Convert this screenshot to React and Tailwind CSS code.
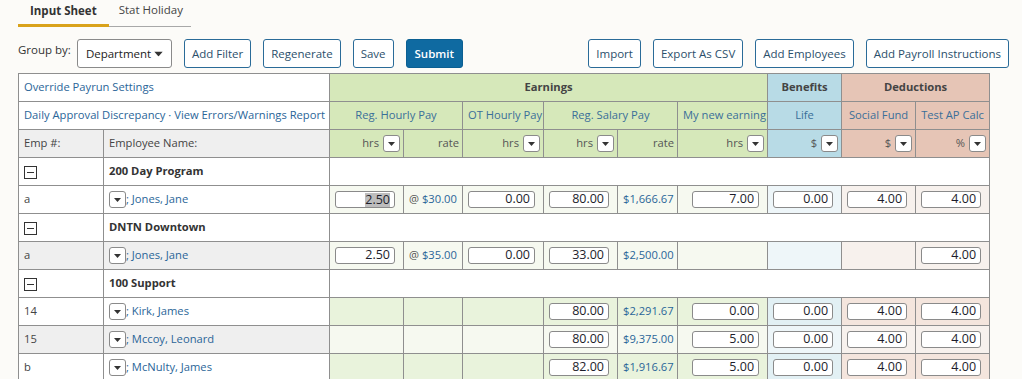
import React from 'react';

const B = 'border border-[#8f8f8f]';

function Caret({ className = '' }) {
  return (
    <svg width="7" height="4" viewBox="0 0 7 4" className={className}>
      <path d="M0 0h7L3.5 4z" fill="#333" />
    </svg>
  );
}

function DropBtn() {
  return (
    <span className="inline-flex h-[17px] w-[17px] shrink-0 items-center justify-center rounded-[3px] border border-[#8a8a8a] bg-white align-middle">
      <Caret />
    </span>
  );
}

function Minus() {
  return (
    <span className="inline-flex h-[13px] w-[13px] items-center justify-center border border-[#333] bg-white">
      <span className="block h-px w-[7px] bg-[#333]" />
    </span>
  );
}

function Num({ v, sel }) {
  return (
    <div className="flex justify-end pr-[3px]">
      <div className="flex h-[17px] w-[67px] items-center justify-end rounded-[3px] border border-[#8a8a8a] bg-white pr-[4px] text-[12.5px] text-[#1d1d2b]">
        {sel ? <span className="bg-[#bdbdbd] leading-[14px]">{v}</span> : v}
      </div>
    </div>
  );
}

const tones = {
  light: { emp: 'bg-white', g: 'bg-[#f6f9f0]', b: 'bg-[#eef6f9]', d: 'bg-[#f7f1ed]' },
  grey: { emp: 'bg-[#efefef]', g: 'bg-[#f6f9f0]', b: 'bg-[#eef6f9]', d: 'bg-[#f7f1ed]' },
  dark: { emp: 'bg-white', g: 'bg-[#e9f3dc]', b: 'bg-[#e2f0f4]', d: 'bg-[#f4e5dd]' },
};

const rows = [
  { type: 'group', name: '200 Day Program' },
  { type: 'emp', tone: 'light', id: 'a', name: 'Jones, Jane', regHrs: '2.50', sel: true, rate: '$30.00', ot: '0.00', sal: '80.00', salRate: '$1,666.67', mine: '7.00', life: '0.00', fund: '4.00', ap: '4.00' },
  { type: 'group', name: 'DNTN Downtown' },
  { type: 'emp', tone: 'grey', id: 'a', name: 'Jones, Jane', regHrs: '2.50', rate: '$35.00', ot: '0.00', sal: '33.00', salRate: '$2,500.00', ap: '4.00' },
  { type: 'group', name: '100 Support' },
  { type: 'emp', tone: 'dark', id: '14', name: 'Kirk, James', sal: '80.00', salRate: '$2,291.67', mine: '0.00', life: '0.00', fund: '4.00', ap: '4.00' },
  { type: 'emp', tone: 'grey', id: '15', name: 'Mccoy, Leonard', sal: '80.00', salRate: '$9,375.00', mine: '5.00', life: '0.00', fund: '4.00', ap: '4.00' },
  { type: 'emp', tone: 'dark', id: 'b', name: 'McNulty, James', sal: '82.00', salRate: '$1,916.67', mine: '5.00', life: '0.00', fund: '4.00', ap: '4.00' },
];

function Btn({ children, primary }) {
  return primary ? (
    <button className="h-[29px] whitespace-nowrap rounded-[3px] border border-[#0b5f92] bg-[#0f6aa1] px-[8px] text-[11.5px] font-semibold text-white">{children}</button>
  ) : (
    <button className="h-[29px] whitespace-nowrap rounded-[3px] border border-[#2a6b98] bg-white px-[7px] text-[11.5px] text-[#2b4f6b]">{children}</button>
  );
}

export default function App() {
  const td = `${B} h-[28px] px-[5px] text-[11.2px]`;
  return (
    <div className="h-[379px] w-[1022px] overflow-hidden bg-[#fcfbf8] pl-[18px] text-[#333]" style={{ fontFamily: '"Open Sans", "Liberation Sans", sans-serif' }}>
      <div className="flex h-[27px] w-[173px] items-end whitespace-nowrap border-b border-[#a8a8a8] text-[11.5px]">
        <div className="-mb-px border-b-[3px] border-[#d9a21b] px-[12px] pb-[5px] font-bold text-[#333]">Input Sheet</div>
        <div className="px-[10px] pb-[8px] text-[#444]">Stat Holiday</div>
      </div>

      <div className="mt-[12px] flex items-start gap-[12px] pr-[13px]">
        <span className="-mr-[6px] mt-[2px] whitespace-nowrap text-[11.5px] text-[#333]">Group by:</span>
        <div className="flex h-[29px] w-[95px] items-center justify-between rounded-[3px] border border-[#8a8a8a] bg-white pl-[8px] pr-[9px] text-[11.5px] text-[#222]">
          Department <Caret className="scale-125" />
        </div>
        <Btn>Add Filter</Btn>
        <Btn>Regenerate</Btn>
        <Btn>Save</Btn>
        <Btn primary>Submit</Btn>
        <div className="flex-1" />
        <Btn>Import</Btn>
        <Btn>Export As CSV</Btn>
        <Btn>Add Employees</Btn>
        <Btn>Add Payroll Instructions</Btn>
      </div>

      <table className="mt-[5px] w-[972px] table-fixed border-collapse">
        <colgroup>
          {[85, 226, 74, 59, 81, 74, 60, 90, 74, 74, 74].map((w, i) => (
            <col key={i} style={{ width: w }} />
          ))}
        </colgroup>
        <tbody>
          <tr>
            <td colSpan={2} className={`${td} bg-white text-[#2a6598]`}>Override Payrun Settings</td>
            <td colSpan={6} className={`${td} bg-[#d6e8ba] text-center font-bold text-[#444]`}>Earnings</td>
            <td className={`${td} bg-[#b8dbe6] text-center font-bold text-[#444]`}>Benefits</td>
            <td colSpan={2} className={`${td} bg-[#e6c5b6] text-center font-bold text-[#444]`}>Deductions</td>
          </tr>
          <tr>
            <td colSpan={2} className={`${td} whitespace-nowrap bg-white px-[4px] text-[#2a6598]`}>Daily Approval Discrepancy · View Errors/Warnings Report</td>
            <td colSpan={2} className={`${td} bg-[#d6e8ba] text-center text-[#3a6f99]`}>Reg. Hourly Pay</td>
            <td className={`${td} whitespace-nowrap bg-[#d6e8ba] px-[2px] text-center text-[#3a6f99]`}>OT Hourly Pay</td>
            <td colSpan={2} className={`${td} bg-[#d6e8ba] text-center text-[#3a6f99]`}>Reg. Salary Pay</td>
            <td className={`${td} whitespace-nowrap bg-[#d6e8ba] px-[2px] text-center text-[#3a6f99]`}>My new earning</td>
            <td className={`${td} bg-[#b8dbe6] text-center text-[#3a6f99]`}>Life</td>
            <td className={`${td} whitespace-nowrap bg-[#e6c5b6] px-[2px] text-center text-[#3a6f99]`}>Social Fund</td>
            <td className={`${td} whitespace-nowrap bg-[#e6c5b6] px-[2px] text-center text-[#3a6f99]`}>Test AP Calc</td>
          </tr>
          <tr>
            <td className={`${td} bg-[#efefef] text-[#444]`}>Emp #:</td>
            <td className={`${td} bg-[#efefef] text-[#444]`}>Employee Name:</td>
            {[
              ['hrs', true, 'bg-[#d6e8ba]'],
              ['rate', false, 'bg-[#d6e8ba]'],
              ['hrs', true, 'bg-[#d6e8ba]'],
              ['hrs', true, 'bg-[#d6e8ba]'],
              ['rate', false, 'bg-[#d6e8ba]'],
              ['hrs', true, 'bg-[#d6e8ba]'],
              ['$', true, 'bg-[#b8dbe6]'],
              ['$', true, 'bg-[#e6c5b6]'],
              ['%', true, 'bg-[#e6c5b6]'],
            ].map(([t, dd, bg], i) => (
              <td key={i} className={`${td} ${bg} pr-[3px] text-right text-[#555]`}>
                <span className="inline-flex items-center gap-[4px]">
                  {t}
                  {dd && <DropBtn />}
                </span>
              </td>
            ))}
          </tr>
          {rows.map((r, i) =>
            r.type === 'group' ? (
              <tr key={i} className="bg-white">
                <td className={td}><span className="flex items-center pt-px"><Minus /></span></td>
                <td className={`${td} font-bold text-[#333]`}>{r.name}</td>
                <td colSpan={9} className={td} />
              </tr>
            ) : (
              <tr key={i}>
                <td className={`${td} ${tones[r.tone].emp} text-[#444]`}>{r.id}</td>
                <td className={`${td} ${tones[r.tone].emp} px-[3px]`}>
                  <span className="flex items-center">
                    <DropBtn />
                    <span className="text-[#2a6598]">; {r.name}</span>
                  </span>
                </td>
                <td className={`${td} ${tones[r.tone].g} px-0`}>{r.regHrs && <Num v={r.regHrs} sel={r.sel} />}</td>
                <td className={`${td} ${tones[r.tone].g} whitespace-nowrap px-[4px]`}>
                  {r.rate && (<><span className="text-[#555]">@ </span><span className="text-[#2a6598]">{r.rate}</span></>)}
                </td>
                <td className={`${td} ${tones[r.tone].g} px-0`}>{r.ot && <Num v={r.ot} />}</td>
                <td className={`${td} ${tones[r.tone].g} px-0`}>{r.sal && <Num v={r.sal} />}</td>
                <td className={`${td} ${tones[r.tone].g} whitespace-nowrap px-[4px] text-[#2a6598]`}>{r.salRate}</td>
                <td className={`${td} ${tones[r.tone].g} px-0`}>{r.mine && <Num v={r.mine} />}</td>
                <td className={`${td} ${tones[r.tone].b} px-0`}>{r.life && <Num v={r.life} />}</td>
                <td className={`${td} ${tones[r.tone].d} px-0`}>{r.fund && <Num v={r.fund} />}</td>
                <td className={`${td} ${tones[r.tone].d} px-0`}>{r.ap && <Num v={r.ap} />}</td>
              </tr>
            )
          )}
        </tbody>
      </table>
    </div>
  );
}
